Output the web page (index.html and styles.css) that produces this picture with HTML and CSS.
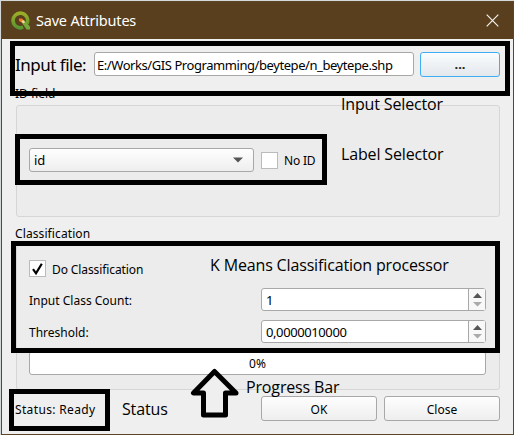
FILE: index.html
```html
<!DOCTYPE html>
<html lang="en">
<head>
<meta charset="utf-8">
<title>Save Attributes</title>
<link rel="stylesheet" href="styles.css">
</head>
<body>
<main class="window">
  <header class="titlebar">
    <svg class="logo" width="20" height="20" viewBox="0 0 20 20">
      <defs><linearGradient id="g" x2="0" y2="1"><stop stop-color="#9aae26"/><stop offset="1" stop-color="#589632"/></linearGradient></defs>
      <path d="M16 12.500A7.300 7.300 0 1 0 12.200 16.200" fill="none" stroke="url(#g)" stroke-width="3.600"/>
      <path d="M10 10.500l3-1.500 6 6.500v3h-3.500z" fill="#78a83d"/>
      <path d="M8 7.500h3l2.500 2.500-2 2L8 10z" fill="#ee7d24"/>
      <path d="M10.500 10.500l1.500-1.500 2 2-1.500 1.500z" fill="#f5d9a0"/>
    </svg>
    <h1 class="title">Save Attributes</h1>
    <svg class="close" width="13" height="13" viewBox="0 0 13 13"><path d="M.7.7l11.6 11.6M12.3.7L.7 12.3" stroke="#f4f1ed" stroke-width="1.2"/></svg>
  </header>
  <div class="content">
    <div class="file-row">
      <label class="file-label">Input file:</label>
      <div class="field file-path"><span>E:/Works/GIS Programming/beytepe/n_beytepe.shp</span></div>
      <div class="button browse">...</div>
    </div>
    <div class="group-title id-title"><span>ID field</span></div>
    <section class="group id-group">
      <div class="button combo"><span>id</span><svg width="10" height="6" viewBox="0 0 10 6"><path d="M0 .5h10L5 5.5z" fill="#555"/></svg></div>
      <div class="checkbox"></div>
      <span class="no-id">No ID</span>
    </section>
    <div class="group-title class-title"><span>Classification</span></div>
    <section class="group class-group">
      <div class="check-row">
        <div class="checkbox"><svg width="15" height="15" viewBox="0 0 15 15"><path d="M3 8.2L6 12.3 11.8 2.8" fill="none" stroke="#000" stroke-width="2.2"/></svg></div>
        <span class="do-class">Do Classification</span>
      </div>
      <div class="form-row">
        <span class="count-label">Input Class Count:</span>
        <div class="field spin"><span>1</span><div class="steps"><svg width="9" height="14" viewBox="0 0 9 14"><path d="M0 5L4.500 0 9 5z" fill="#555"/><path d="M0 9h9l-4.500 4.500z" fill="#aaa"/></svg></div></div>
      </div>
      <div class="form-row">
        <span class="threshold-label">Threshold:</span>
        <div class="field spin"><span class="threshold">0,0000010000</span><div class="steps"><svg width="9" height="14" viewBox="0 0 9 14"><path d="M0 5L4.500 0 9 5z" fill="#555"/><path d="M0 9h9l-4.500 4.500z" fill="#aaa"/></svg></div></div>
      </div>
      <div class="field progress"><span>0%</span></div>
    </section>
    <footer class="footer">
      <span class="status">Status: Ready</span>
      <div class="button action">OK</div>
      <div class="button action">Close</div>
    </footer>
  </div>
</main>
<div class="frame frame-input"></div>
<div class="frame frame-label"></div>
<div class="frame frame-class"></div>
<div class="frame frame-status"></div>
<span class="note note-input">Input Selector</span>
<span class="note note-label">Label Selector</span>
<span class="note note-class">K Means Classification processor</span>
<span class="note note-progress">Progress Bar</span>
<span class="note note-status">Status</span>
<svg class="arrow" width="50" height="52" viewBox="0 0 50 52"><path d="M24.500 3.500L3.500 25h10v22h22V25H46z" fill="#efefef" stroke="#000" stroke-width="5" stroke-linejoin="round"/></svg>
</body>
</html>
```
FILE: styles.css
```css
* { box-sizing: border-box; }
body {
  margin: 0;
  width: 514px;
  height: 435px;
  overflow: hidden;
  position: relative;
  background: #d5d8d8;
  font: 13px/16px "Noto Sans", sans-serif;
  color: #000;
}
span, label { white-space: nowrap; }
.window {
  width: 513px;
  height: 434px;
  margin: 1px 0 0 1px;
  border: 1px solid #5b4725;
  background: #efefef;
}
.titlebar {
  display: flex;
  align-items: center;
  height: 37px;
  padding: 0 14px 0 9px;
  background: #593f1d;
}
.title {
  flex: 1;
  margin: -2px 0 0 5px;
  color: #fff;
  font: 400 14.500px/20px "Noto Sans", sans-serif;
  letter-spacing: -0.2px;
}
.close { margin-top: -1px; }
.content { padding: 13px 13px 0 14px; }
.file-row { display: flex; height: 25px; }
.file-label {
  width: 78px;
  margin-left: -1px;
  font-size: 17px;
  line-height: 26px;
  letter-spacing: -0.5px;
}
.field {
  border: 1px solid #a8a8a8;
  border-radius: 3px;
  background: #fff;
}
.file-path {
  width: 320px;
  height: 24px;
  margin-left: 1px;
  padding-left: 2px;
  line-height: 24px;
  letter-spacing: -0.43px;
}
.button {
  border: 1px solid #a8a8a8;
  border-radius: 3px;
  background: linear-gradient(#fefefe, #eeeeee);
  text-align: center;
}
.browse {
  width: 80px;
  height: 25px;
  margin-left: 6px;
  border-color: #3daef5;
  background: linear-gradient(#fafcfd, #e3e8ed);
  color: #222;
  font-weight: 700;
  line-height: 23px;
}
.group-title { height: 16px; margin-left: -1px; font-size: 12px; }
.id-title { margin-top: 9px; }
.class-title { margin-top: 9px; letter-spacing: 0.1px; }
.group {
  border: 1px solid #d6d6d6;
  border-radius: 3px;
  background: #ececec;
}
.id-group {
  display: flex;
  align-items: center;
  height: 112px;
  margin-top: 3px;
  padding: 0 0 2px 12px;
}
.combo {
  display: flex;
  align-items: center;
  justify-content: space-between;
  width: 225px;
  height: 24px;
  padding: 0 10px 0 4px;
}
.id-group .checkbox { margin-left: 7px; }
.checkbox {
  width: 17px;
  height: 17px;
  border: 1px solid #bbb;
  background: #fff;
}
.checkbox svg { display: block; }
.no-id { margin: 1px 0 0 6px; font-size: 12px; letter-spacing: -0.2px; }
.class-group { height: 145px; margin-top: 3px; padding: 14px 13px 0 12px; font-size: 12px; }
.check-row { display: flex; align-items: center; height: 17px; }
.do-class { margin: 2px 0 0 6px; letter-spacing: -0.1px; }
.form-row {
  display: flex;
  align-items: center;
  justify-content: space-between;
  height: 23px;
  margin-top: 11px;
}
.form-row + .form-row { margin-top: 9px; }
.count-label, .threshold-label { margin-top: 2px; }
.spin {
  display: flex;
  align-items: center;
  justify-content: space-between;
  width: 225px;
  height: 23px;
  padding-left: 4px;
  font-size: 13px;
}
.threshold { letter-spacing: -0.4px; }
.steps {
  display: flex;
  align-items: center;
  justify-content: center;
  width: 17px;
  height: 21px;
  border-left: 1px solid #a8a8a8;
  background: #f8f8f8;
}
.progress {
  height: 24px;
  margin-top: 8px;
  text-align: center;
  line-height: 24px;
}
.footer {
  display: flex;
  gap: 7px;
  height: 25px;
  margin-top: 6px;
  font-size: 12px;
  line-height: 25px;
}
.status { flex: 1; margin: 1px 0 0 -1px; letter-spacing: 0.35px; }
.action { width: 116px; line-height: 25px; }
.frame { position: absolute; border: 5px solid #000; }
.frame-input { left: 10px; top: 41px; width: 500px; height: 55px; }
.frame-label { left: 15px; top: 134px; width: 312px; height: 51px; }
.frame-class { left: 11px; top: 241px; width: 489px; height: 112px; }
.frame-status { left: 9px; top: 389px; width: 101px; height: 42px; }
.note {
  position: absolute;
  font: 16px/20px "Open Sans", sans-serif;
  letter-spacing: -0.15px;
}
.note-input { left: 341px; top: 94px; }
.note-label { left: 341px; top: 144px; }
.note-class { left: 210px; top: 255px; }
.note-progress { left: 246px; top: 377px; }
.note-status { left: 122px; top: 399px; }
.arrow { position: absolute; left: 190px; top: 368px; }
```
